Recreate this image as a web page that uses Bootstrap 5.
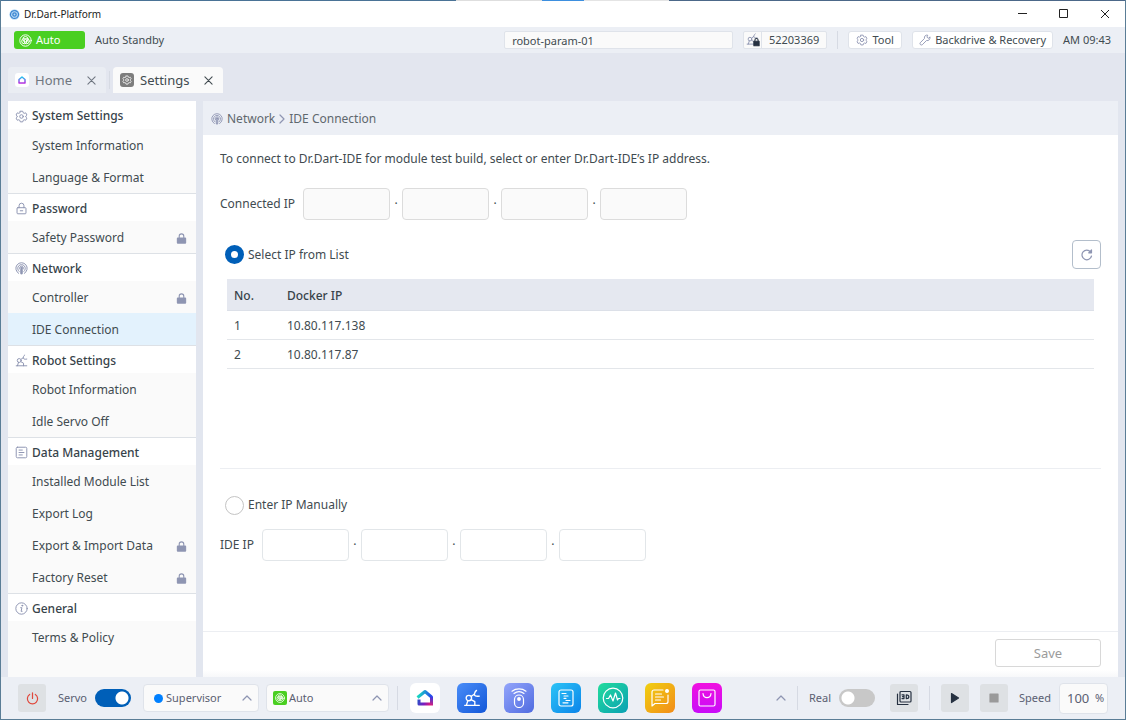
<!DOCTYPE html>
<html lang="en">
<head>
<meta charset="utf-8">
<meta name="viewport" content="width=device-width, initial-scale=1">
<title>Dr.Dart-Platform</title>
<link href="https://cdn.jsdelivr.net/npm/bootstrap@5.3.0/dist/css/bootstrap.min.css" rel="stylesheet">
<script src="https://cdn.jsdelivr.net/npm/bootstrap@5.3.0/dist/js/bootstrap.bundle.min.js"></script>
<style>
  :root { --ink:#414b50; --ink-dark:#263238; --haze:#e2e6ef; --bar:#eceff5; --line:#dfe3ea; --blue:#005fb8; --icon:#8e95b2; }
  body { font-family:"Noto Sans", sans-serif; font-size:12px; line-height:20px; color:var(--ink); background:#5a7d96; }
  svg { display:block; flex:none; fill:none; stroke:currentColor; stroke-width:1.2; stroke-linecap:round; stroke-linejoin:round; }
  a { color:inherit; text-decoration:none; }
  .fs-s { font-size:11px; line-height:16px; }
  .fs-title { font-size:10px; line-height:16px; }
  .fs-l { font-size:13px; }
  .tone { color:var(--icon); }
  .edge { height:1px; background:linear-gradient(90deg,#4a7396 0 40.5%,#dedede 40.5% 48.1%,#3d8fdf 48.1% 51.9%,#e4e4e4 51.9% 59.4%,#4c6889 59.4%); }
  .frame { min-height:100vh; padding:0 1px 1px; }
  .titlebar { height:26px; background:#fff; color:#222; padding:0 0 0 8px; }
  .winbtn { width:41px; height:26px; padding:0; border:0; background:none; color:#222; display:flex; align-items:center; justify-content:center; }
  .winbtn svg { stroke-linecap:butt; stroke-width:1; }
  .statusbar { height:26px; background:var(--bar); padding:0 14px 0 13px; gap:10px; }
  .mode { width:71px; height:18px; background:#4acf21; color:#fff; border-radius:3px; padding:0 5px; }
  .param { width:229px; height:18px; padding:0 7px; border:1px solid var(--line); border-radius:2px; background:#fafafa; color:var(--ink); }
  .serial { height:18px; width:84px; border:1px solid var(--line); border-radius:2px; background:#fafafa; }
  .serial > span:first-child { width:18px; border-right:1px solid var(--line); padding-left:2px; }
  .vr-s { width:1px; height:18px; background:#d6dae3; }
  .vr-l { width:1px; height:24px; background:#d6dae3; }
  .topbtn { height:18px; min-width:54px; border:1px solid var(--line); border-radius:3px; background:#fff; color:var(--ink); padding:0 6px; display:flex; align-items:center; justify-content:center; gap:4px; }
  .tabstrip { background:#e3e6ef; padding:14px 7px 0; height:48px; gap:3px; }
  .tabitem { height:26px; border-radius:4px 4px 0 0; background:#eaedf3; color:#6f7680; padding:0 6px 0 7px; gap:6px; font-size:13px; }
  .tabitem.active { background:#fafafa; color:var(--ink); }
  .tabitem button { border:0; background:none; padding:4px; color:inherit; margin-left:5px; }
  .tabicon { padding:3px; border-radius:3px; background:#fff; }
  .active .tabicon { background:#7d7d7d; color:#fff; padding:2px; }
  .workspace { background:var(--haze); padding:0 7px; gap:7px; }
  .sidenav { width:188px; background:#fafafa; }
  .sidenav section + section { border-top:1px solid #dde1e6; }
  .sidenav h2 { height:28px; margin:0; padding:2px 7px 0; font-size:12px; line-height:20px; font-weight:500; color:#37434a; background:#fff; }
  .sidenav section + section h2 { height:27px; }
  .sidenav h2 svg { color:var(--icon); }
  .sidenav li a { height:32px; padding:2px 9px 0 24px; display:flex; align-items:center; justify-content:space-between; }
  .sidenav li a.active { background:#e3f2fd; }
  .lockicon { fill:var(--icon); stroke:var(--icon); }
  .crumbs { height:34px; background:var(--bar); color:#5f686e; padding:1px 8px 0; }
  .panel { background:#fff; }
  .panel-body { padding:14px 17px 0; }
  .octet { width:87px; height:32px; border:1px solid #e2e6e9; border-radius:4px; background:#fff; padding:0 8px; }
  .octet:disabled { background:#fafafa; border-color:#dcdcdc; }
  .octdot { width:12px; text-align:center; }
  .connected { margin-top:19px; }
  .pick { height:28px; padding-left:5px; }
  .pick .form-check-input { width:19px; height:19px; margin:0; border:1px solid #c4c4c4; }
  .pick .form-check-input:checked { border:6px solid var(--blue); background:#fff; }
  .manual-pick { margin-top:22px; }
  .manual-row { margin-top:10px; }
  .refresh { width:29px; height:29px; border:1px solid #b3becb; border-radius:4px; background:#fff; padding:0; color:var(--icon); display:flex; align-items:center; justify-content:center; }
  .iptable { padding:2px 7px 0 7px; }
  .iptable table { color:var(--ink); border-collapse:separate; border-spacing:0; }
  .iptable th { background:#e5e8f0; font-weight:500; color:#37434a; height:32px; padding:2px 7px 0; border-bottom:1px solid #dce0e8; vertical-align:middle; }
  .iptable td { height:29px; padding:2px 7px 0; border-bottom:1px solid #e3e6ea; background:#fff; vertical-align:middle; }
  .iptable th:first-child { width:53px; }
  .listarea { min-height:192px; border-bottom:1px solid #eceef2; }
  .panel-foot { height:46px; border-top:1px solid #eceef2; padding:0 17px 3px; background:linear-gradient(#fff 38px,#f7f8fa); }
  .savebtn { width:106px; height:28px; border:1px solid #d8d8d8; border-radius:3px; background:#fff; color:#9b9b9b; padding:0; }
  .dock { height:42px; background:var(--bar); padding:0 17px; color:#5a6072; }
  .tools { gap:11px; }
  .sq { width:28px; height:28px; padding:0; border:0; border-radius:3px; background:#dee1e4; color:#263141; display:flex; align-items:center; justify-content:center; }
  .switchy { margin:0; padding:0; min-height:0; display:flex; align-items:center; }
  .switchy .form-check-input { width:36px; height:18px; margin:0; border:0; background-color:#c8c8c8; background-image:radial-gradient(circle,#fff 6px,transparent 7px); background-size:18px 18px; background-repeat:no-repeat; background-position:left center; }
  .switchy .form-check-input:checked { background-color:var(--blue); background-image:radial-gradient(circle,#fff 6px,transparent 7px); background-position:right center; }
  .picker { position:relative; }
  .picker select { appearance:none; width:100%; height:28px; border:1px solid var(--line); border-radius:4px; background:#fafafa; color:#5a6072; padding:0 22px; }
  .picker .lead-ic, .picker .caret-ic { position:absolute; top:0; height:28px; display:flex; align-items:center; pointer-events:none; }
  .picker .lead-ic { left:7px; }
  .picker .caret-ic { right:7px; color:var(--icon); }
  .role { width:116px; margin:0 7px 0 12px; }
  .run { width:123px; }
  .runicon { background:#4acf21; border-radius:2px; color:#fff; }
  .apps { gap:17px; }
  .app { width:30px; height:30px; border-radius:6px; color:#fff; display:flex; align-items:center; justify-content:center; }
  .a-home { background:#fff; } .a-robot { background:linear-gradient(135deg,#4a8df8,#1257d8); }
  .a-remote { background:linear-gradient(135deg,#93a5fb,#4f6be0); } .a-task { background:linear-gradient(135deg,#2cc4f6,#0b84ea); }
  .a-mon { background:linear-gradient(135deg,#22dc9c,#0aa0b4); } .a-log { background:linear-gradient(135deg,#f0d010,#f28c1a); }
  .a-store { background:linear-gradient(180deg,#f010e0,#c80cf8); }
  .speed { width:49px; height:31px; border:1px solid var(--line); border-radius:4px; background:#fafafa; padding:0 6px 0 7px; }
  .speed input { width:24px; border:0; padding:0; background:none; color:#5a6072; }
  .dotblue { width:9px; height:9px; border-radius:50%; background:#0080ff; }
</style>
</head>
<body>
<svg width="0" height="0" class="position-absolute" aria-hidden="true">
  <defs>
    <linearGradient id="gRoof" gradientUnits="userSpaceOnUse" x1="3" y1="8" x2="17" y2="10"><stop offset="0" stop-color="#19d8c0"/><stop offset="1" stop-color="#2340f0"/></linearGradient>
    <linearGradient id="gWall" gradientUnits="userSpaceOnUse" x1="17" y1="8" x2="14" y2="18"><stop offset="0" stop-color="#2340f0"/><stop offset="1" stop-color="#f0186c"/></linearGradient>
    <linearGradient id="gBase" gradientUnits="userSpaceOnUse" x1="3" y1="12" x2="16" y2="17"><stop offset="0" stop-color="#2a50c8"/><stop offset=".5" stop-color="#7a1cc0"/><stop offset="1" stop-color="#f0186c"/></linearGradient>
    <linearGradient id="gHomeV" x1="0" y1="0" x2="0" y2="1"><stop offset="0" stop-color="#1cc4f0"/><stop offset="1" stop-color="#b92fe0"/></linearGradient>
  </defs>
  <symbol id="i-gear" viewBox="0 0 16 16"><path d="M6.500 1.500h3l.5 1.800 1.300.8 1.900-.6 1.500 2.600-1.400 1.300v1.300l1.400 1.300-1.500 2.600-1.900-.6-1.300.8-.5 1.800h-3l-.5-1.800-1.300-.8-1.900.6-1.500-2.600 1.400-1.300v-1.300L1.300 6.100l1.500-2.600 1.900.6 1.300-.8z"/><circle cx="8" cy="8" r="2.200"/></symbol>
  <symbol id="i-lock" viewBox="0 0 16 16"><rect x="2.500" y="7" width="11" height="7.500" rx="1"/><path d="M5 7V4.500a3 3 0 0 1 6 0V7M6.500 10.800h3"/></symbol>
  <symbol id="i-lockf" viewBox="0 0 12 12"><rect x="1.500" y="5.500" width="9" height="5.500" rx=".5"/><path d="M3.500 5V3.500a2.500 2.500 0 0 1 5 0V5" fill="none"/></symbol>
  <symbol id="i-net" viewBox="0 0 16 16"><path d="M4.500 14A7 7 0 1 1 11.500 14M5 11.600a4.700 4.700 0 1 1 6 0M6.400 9.400a2.400 2.400 0 1 1 3.200 0"/><circle cx="8" cy="7.500" r="1" fill="currentColor"/><path d="M8 8.500V14.500M7 10v4.500h2V10"/></symbol>
  <symbol id="i-arm" viewBox="0 0 16 16"><path d="M1.500 14.500h13M3 14.500l1.300-4.200M7.200 9.500l3.300 1.800v3.200M7.500 6.500l2.700-2"/><circle cx="5.200" cy="8" r="2.400"/><path d="M14.500 6.300c-3 .6-4.800-.4-4.300-1.900.3-1.200.3-2 1.800-3.200"/></symbol>
  <symbol id="i-doc" viewBox="0 0 16 16"><rect x="1.500" y="1.500" width="13" height="13" rx="1.500"/><path d="M5 5h4M5 8h6M5 11h4"/></symbol>
  <symbol id="i-info" viewBox="0 0 16 16"><circle cx="8" cy="8" r="7"/><path d="M7 7h1.500l-1 4.500h1.200"/><circle cx="8.900" cy="4.500" r=".6" fill="currentColor"/></symbol>
  <symbol id="i-x" viewBox="0 0 10 10"><path d="M1 1l8 8M9 1L1 9"/></symbol>
  <symbol id="i-up" viewBox="0 0 10 10"><path d="M1 7l4-4 4 4"/></symbol>
  <symbol id="i-auto" viewBox="0 0 16 16"><circle cx="8" cy="8" r="7"/><circle cx="8" cy="6.300" r="3.200"/><circle cx="6.500" cy="8.800" r="3.200"/><circle cx="9.500" cy="8.800" r="3.200"/></symbol>
</svg>

<div class="frame d-flex flex-column">
  <div class="edge"></div>
  <header class="titlebar d-flex align-items-center">
    <svg width="11" height="11" viewBox="0 0 16 16" style="color:#3c86d0"><circle cx="8" cy="8" r="7.500" fill="#b9daf6" stroke="none"/><circle cx="8" cy="8" r="5.800" stroke-width="1.800" stroke-dasharray="4 1.500"/><circle cx="8" cy="8" r="2.400" stroke-width="2"/></svg>
    <span class="fs-title ps-1 flex-grow-1">Dr.Dart-Platform</span>
    <button class="winbtn" type="button" aria-label="Minimize"><svg width="10" height="10" viewBox="0 0 10 10"><path d="M0 4.500h9"/></svg></button>
    <button class="winbtn" type="button" aria-label="Maximize"><svg width="10" height="10" viewBox="0 0 10 10"><rect x=".5" y=".5" width="8" height="8"/></svg></button>
    <button class="winbtn" type="button" aria-label="Close"><svg width="10" height="10"><use href="#i-x"/></svg></button>
  </header>

  <div class="statusbar fs-s d-flex align-items-center">
    <span class="mode d-flex align-items-center gap-1"><svg width="13" height="13"><use href="#i-auto"/></svg>Auto</span>
    <span>Auto Standby</span>
    <input class="param ms-auto" type="text" value="robot-param-01" aria-label="Robot parameter">
    <span class="serial d-flex align-items-stretch">
      <span class="d-flex align-items-center tone"><svg width="14" height="14" viewBox="0 0 16 16"><use href="#i-arm" width="14" height="14"/><rect x="9" y="9.500" width="6" height="5" fill="#263141" stroke="#263141"/><path d="M10.200 9V8a1.800 1.800 0 0 1 3.600 0v1" stroke="#263141"/></svg></span>
      <span class="flex-grow-1 text-center">52203369</span>
    </span>
    <span class="vr-s"></span>
    <button class="topbtn" type="button"><svg class="tone" width="12" height="12"><use href="#i-gear"/></svg>Tool</button>
    <button class="topbtn" type="button"><svg class="tone" width="12" height="12" viewBox="0 0 16 16"><path d="M14.500 4.500l-2.300 1.300L10.500 4l1.200-2.400C9 .8 6.500 3 7.300 6L1.600 11.700c-1.200 1.700 1 3.900 2.700 2.700L10 8.700c3 .8 5.300-1.700 4.500-4.200z"/></svg>Backdrive &amp; Recovery</button>
    <span>AM 09:43</span>
  </div>

  <nav class="tabstrip d-flex" aria-label="Open modules">
    <div class="tabitem d-flex align-items-center"><span class="tabicon"><svg width="8" height="8" viewBox="0 0 16 16" style="stroke-width:3"><path d="M2 7l6-5 6 5v7H2z" stroke="url(#gHomeV)"/></svg></span><a href="#">Home</a><button type="button" aria-label="Close Home"><svg width="9" height="9"><use href="#i-x"/></svg></button></div>
    <span class="vr-s my-1"></span>
    <div class="tabitem active d-flex align-items-center"><span class="tabicon"><svg width="10" height="10"><use href="#i-gear"/></svg></span><a href="#">Settings</a><button type="button" aria-label="Close Settings"><svg width="9" height="9"><use href="#i-x"/></svg></button></div>
  </nav>

  <div class="workspace d-flex flex-grow-1">
    <nav class="sidenav flex-shrink-0" aria-label="Settings">
      <section><h2 class="d-flex align-items-center gap-1"><svg width="13" height="13"><use href="#i-gear"/></svg>System Settings</h2>
        <ul class="list-unstyled m-0"><li><a href="#">System Information</a></li><li><a href="#">Language &amp; Format</a></li></ul></section>
      <section><h2 class="d-flex align-items-center gap-1"><svg width="13" height="13"><use href="#i-lock"/></svg>Password</h2>
        <ul class="list-unstyled m-0"><li><a href="#">Safety Password<svg class="lockicon" width="11" height="11"><use href="#i-lockf"/></svg></a></li></ul></section>
      <section><h2 class="d-flex align-items-center gap-1"><svg width="13" height="13"><use href="#i-net"/></svg>Network</h2>
        <ul class="list-unstyled m-0"><li><a href="#">Controller<svg class="lockicon" width="11" height="11"><use href="#i-lockf"/></svg></a></li><li><a href="#" class="active" aria-current="page">IDE Connection</a></li></ul></section>
      <section><h2 class="d-flex align-items-center gap-1"><svg width="13" height="13"><use href="#i-arm"/></svg>Robot Settings</h2>
        <ul class="list-unstyled m-0"><li><a href="#">Robot Information</a></li><li><a href="#">Idle Servo Off</a></li></ul></section>
      <section><h2 class="d-flex align-items-center gap-1"><svg width="13" height="13"><use href="#i-doc"/></svg>Data Management</h2>
        <ul class="list-unstyled m-0"><li><a href="#">Installed Module List</a></li><li><a href="#">Export Log</a></li><li><a href="#">Export &amp; Import Data<svg class="lockicon" width="11" height="11"><use href="#i-lockf"/></svg></a></li><li><a href="#">Factory Reset<svg class="lockicon" width="11" height="11"><use href="#i-lockf"/></svg></a></li></ul></section>
      <section><h2 class="d-flex align-items-center gap-1"><svg width="13" height="13"><use href="#i-info"/></svg>General</h2>
        <ul class="list-unstyled m-0"><li><a href="#">Terms &amp; Policy</a></li></ul></section>
    </nav>

    <main class="panel flex-grow-1 d-flex flex-column">
      <div class="crumbs d-flex align-items-center gap-1"><svg class="tone" width="12" height="12"><use href="#i-net"/></svg><a href="#">Network</a><svg class="tone" width="6" height="10" viewBox="0 0 6 10"><path d="M1 1l4 4-4 4"/></svg><span>IDE Connection</span></div>
      <div class="panel-body flex-grow-1">
        <p class="mb-0">To connect to Dr.Dart-IDE for module test build, select or enter Dr.Dart-IDE’s IP address.</p>
        <div class="connected d-flex align-items-center" role="group" aria-labelledby="conn"><span id="conn" class="me-2">Connected IP</span>
          <input class="octet" disabled aria-label="Connected IP part 1"><span class="octdot">·</span><input class="octet" disabled aria-label="Connected IP part 2"><span class="octdot">·</span><input class="octet" disabled aria-label="Connected IP part 3"><span class="octdot">·</span><input class="octet" disabled aria-label="Connected IP part 4"></div>
        <div class="d-flex align-items-center justify-content-between mt-3 pt-1">
          <div class="pick d-flex align-items-center gap-1"><input class="form-check-input" type="radio" name="src" id="fromList" checked><label for="fromList">Select IP from List</label></div>
          <button class="refresh" type="button" aria-label="Refresh"><svg width="12" height="12" viewBox="0 0 12 12"><path d="M10.500 7A4.800 4.800 0 1 1 9.600 3M10.500 1v2.800H7.700z"/></svg></button>
        </div>
        <div class="listarea mt-2">
          <div class="iptable"><table class="w-100"><thead><tr><th scope="col">No.</th><th scope="col">Docker IP</th></tr></thead><tbody><tr><td>1</td><td>10.80.117.138</td></tr><tr><td>2</td><td>10.80.117.87</td></tr></tbody></table></div>
        </div>
        <div class="pick manual-pick d-flex align-items-center gap-1"><input class="form-check-input" type="radio" name="src" id="manual"><label for="manual">Enter IP Manually</label></div>
        <div class="manual-row d-flex align-items-center" role="group" aria-labelledby="ideip"><span id="ideip" class="me-2">IDE IP</span>
          <input class="octet" aria-label="IDE IP part 1"><span class="octdot">·</span><input class="octet" aria-label="IDE IP part 2"><span class="octdot">·</span><input class="octet" aria-label="IDE IP part 3"><span class="octdot">·</span><input class="octet" aria-label="IDE IP part 4"></div>
      </div>
      <div class="panel-foot d-flex align-items-center justify-content-end"><button class="savebtn fs-l" type="button">Save</button></div>
    </main>
  </div>

  <footer class="dock fs-s d-flex align-items-center">
    <button class="sq" type="button" aria-label="Power"><svg width="13" height="13" viewBox="0 0 16 16" style="color:#e0483c;stroke-width:1.500"><path d="M8 1v7M4.500 3a6.300 6.300 0 1 0 7 0"/></svg></button>
    <label for="servo" class="ms-2 ps-1 me-2">Servo</label>
    <div class="form-check form-switch switchy"><input class="form-check-input" type="checkbox" role="switch" id="servo" checked></div>
    <div class="picker role"><span class="lead-ic ps-1"><span class="dotblue"></span></span><select aria-label="User role"><option>Supervisor</option></select><span class="caret-ic"><svg width="10" height="10"><use href="#i-up"/></svg></span></div>
    <div class="picker run"><span class="lead-ic"><span class="runicon"><svg width="14" height="14" viewBox="-3 -3 22 22"><use href="#i-auto" width="16" height="16"/></svg></span></span><select aria-label="Mode"><option>Auto</option></select><span class="caret-ic"><svg width="10" height="10"><use href="#i-up"/></svg></span></div>
    <span class="vr-l mx-2"></span>
    <div class="d-flex apps ms-1">
      <a href="#" class="app a-home" aria-label="Home"><svg width="20" height="20" viewBox="0 0 20 20" style="stroke-width:3;stroke-linecap:butt"><path d="M2.500 9.500L10 3.500l6.500 5.500" stroke="url(#gRoof)"/><path d="M16.500 8.200V17.500" stroke="url(#gWall)"/><path d="M4 11.500v4.500h11" stroke="url(#gBase)"/></svg></a>
      <a href="#" class="app a-robot" aria-label="Robot"><svg width="18" height="18"><use href="#i-arm"/></svg></a>
      <a href="#" class="app a-remote" aria-label="Remote"><svg width="18" height="20" viewBox="0 0 18 20"><rect x="4.500" y="7" width="9" height="12.500" rx="4.500"/><circle cx="9" cy="11" r="1.300" fill="#fff"/><path d="M2 3.200c4-3 10-3 14 0M4 5.500c3-2.200 7-2.200 10 0"/></svg></a>
      <a href="#" class="app a-task" aria-label="Task editor"><svg width="18" height="18" viewBox="0 0 18 18"><rect x="2" y="1" width="14" height="16" rx="2"/><path d="M5 4.500h4M7 7h4M7 9.300h2M9 11.500h4M6 13.800h5"/></svg></a>
      <a href="#" class="app a-mon" aria-label="Monitor"><svg width="22" height="22" viewBox="0 0 22 22"><circle cx="11" cy="11" r="9.800"/><path d="M4.500 11.500h2l2-3.500 2.500 6 2.500-8 2 7 1-1.500h1.500"/></svg></a>
      <a href="#" class="app a-log" aria-label="Log"><svg width="20" height="20" viewBox="0 0 20 20"><path d="M13 2H4a2 2 0 0 0-2 2v14l3-2.500h11a2 2 0 0 0 2-2V7M5.500 6h6M5.500 9h8M5.500 12h5"/><circle cx="17" cy="3" r="1.400" fill="#fff"/></svg></a>
      <a href="#" class="app a-store" aria-label="Store"><svg width="18" height="18" viewBox="0 0 18 18"><rect x="1" y="1" width="16" height="16" rx="1.500"/><path d="M5 4.500c.5 5.500 7.500 5.500 8 0"/></svg></a>
    </div>
    <div class="tools d-flex align-items-center ms-auto">
      <button type="button" class="border-0 bg-transparent p-0 tone" aria-label="Expand"><svg width="10" height="10"><use href="#i-up"/></svg></button>
      <span class="vr-l"></span>
      <div class="d-flex align-items-center gap-2 me-1"><label for="real">Real</label>
        <div class="form-check form-switch switchy"><input class="form-check-input" type="checkbox" role="switch" id="real"></div></div>
      <button class="sq" type="button" aria-label="3D view"><svg width="16" height="16" viewBox="0 0 16 16"><rect x="4" y="1.500" width="11" height="10.500" rx="1"/><path d="M1.500 4v10.500H12" /><path d="M6 4.800h2v3.800H6M6.500 6.700H8M10.300 4.800v3.800c3.400 0 3.400-3.800 0-3.800z"/></svg></button>
      <span class="vr-l"></span>
      <button class="sq" type="button" aria-label="Play"><svg width="10" height="12" viewBox="0 0 10 12"><path d="M1.500 1.500L8.500 6l-7 4.500z" fill="currentColor"/></svg></button>
      <button class="sq" type="button" aria-label="Stop" style="color:#9a9a9a"><svg width="10" height="10" viewBox="0 0 10 10"><rect x="1" y="1" width="8" height="8" fill="currentColor"/></svg></button>
      <div class="d-flex align-items-center gap-2"><label for="speed">Speed</label>
        <span class="speed d-flex align-items-center"><input id="speed" class="fs-l" value="100"><span class="ms-1">%</span></span></div>
    </div>
  </footer>
</div>
</body>
</html>
